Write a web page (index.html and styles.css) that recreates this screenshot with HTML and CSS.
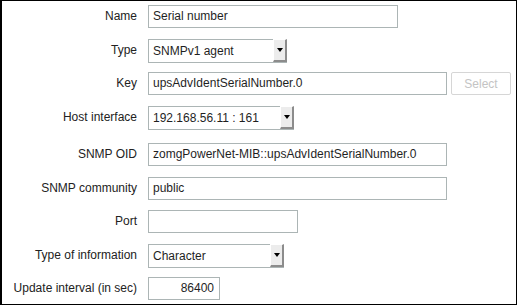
FILE: index.html
```html
<!DOCTYPE html>
<html lang="en">
<head>
    <meta charset="UTF-8">
    <title>Item</title>
    <link rel="stylesheet" href="styles.css">
</head>
<body>
    <div class="frame">
        <div class="form">
            <div class="row">
                <label>Name</label>
                <div class="field w-name">Serial number</div>
            </div>
            <div class="row">
                <label>Type</label>
                <div class="select w-type"><span>SNMPv1 agent</span><i class="arrow"></i></div>
            </div>
            <div class="row">
                <label>Key</label>
                <div class="field w-long">upsAdvIdentSerialNumber.0</div>
                <button class="btn" disabled>Select</button>
            </div>
            <div class="row">
                <label>Host interface</label>
                <div class="select w-host"><span>192.168.56.11 : 161</span><i class="arrow"></i></div>
            </div>
            <div class="row gap-before">
                <label>SNMP OID</label>
                <div class="field w-long">zomgPowerNet-MIB::upsAdvIdentSerialNumber.0</div>
            </div>
            <div class="row">
                <label>SNMP community</label>
                <div class="field w-long">public</div>
            </div>
            <div class="row">
                <label>Port</label>
                <div class="field w-port"></div>
            </div>
            <div class="row">
                <label>Type of information</label>
                <div class="select w-info"><span>Character</span><i class="arrow"></i></div>
            </div>
            <div class="row">
                <label>Update interval (in sec)</label>
                <div class="field w-num">86400</div>
            </div>
        </div>
    </div>
</body>
</html>
```

FILE: styles.css
```css
:root {
    --text-color: #1f1f1f;
    --border-color: #acb5b5;
    --frame-color: #000000;
}

* {
    margin: 0;
    padding: 0;
    box-sizing: border-box;
}

body {
    font-family: 'Liberation Sans', Arial, sans-serif;
    font-size: 12px;
    color: var(--text-color);
    background: #ffffff;
}

.frame {
    width: 517px;
    height: 305px;
    border-top: 1px solid var(--frame-color);
    border-left: 2px solid var(--frame-color);
    border-right: 1px solid var(--frame-color);
    border-bottom: 1px solid var(--frame-color);
    padding-top: 4px;
}

.row {
    display: flex;
    align-items: flex-start;
    height: 33.5px;
}

.row.gap-before {
    margin-top: 4px;
}

.row label {
    width: 135px;
    text-align: right;
    line-height: 23px;
    margin-right: 11px;
    color: #222;
}

.field {
    height: 23px;
    line-height: 21px;
    border: 1px solid var(--border-color);
    padding: 0 4px;
    white-space: nowrap;
    overflow: hidden;
}

.w-name { width: 250px; }
.w-long { width: 299px; }
.w-port { width: 150px; }
.w-num { width: 72px; text-align: right; padding-right: 5px; }

.select {
    display: flex;
    height: 24px;
    border: 1px solid var(--border-color);
    border-right: none;
}

.select span {
    flex: 1;
    line-height: 22px;
    padding-left: 4px;
    white-space: nowrap;
}

.w-type { width: 139px; }
.w-host { width: 146px; }
.w-info { width: 136px; }

.arrow {
    position: relative;
    width: 14px;
    height: 23px;
    background: #ececec;
    border-left: 1px solid #ffffff;
    border-top: 1px solid #ffffff;
    border-right: 2px solid #8c8c8c;
    border-bottom: 2px solid #8c8c8c;
    margin-top: -1px;
}

.arrow::after {
    content: '';
    position: absolute;
    left: 3px;
    top: 8px;
    border-left: 3px solid transparent;
    border-right: 3px solid transparent;
    border-top: 4px solid #000;
}

.btn {
    margin-left: 4px;
    width: 60px;
    height: 23px;
    font-family: inherit;
    font-size: 12px;
    color: #c4c4c4;
    background: #ffffff;
    border: 1px solid #d6d6d6;
    border-radius: 2px;
}
```
